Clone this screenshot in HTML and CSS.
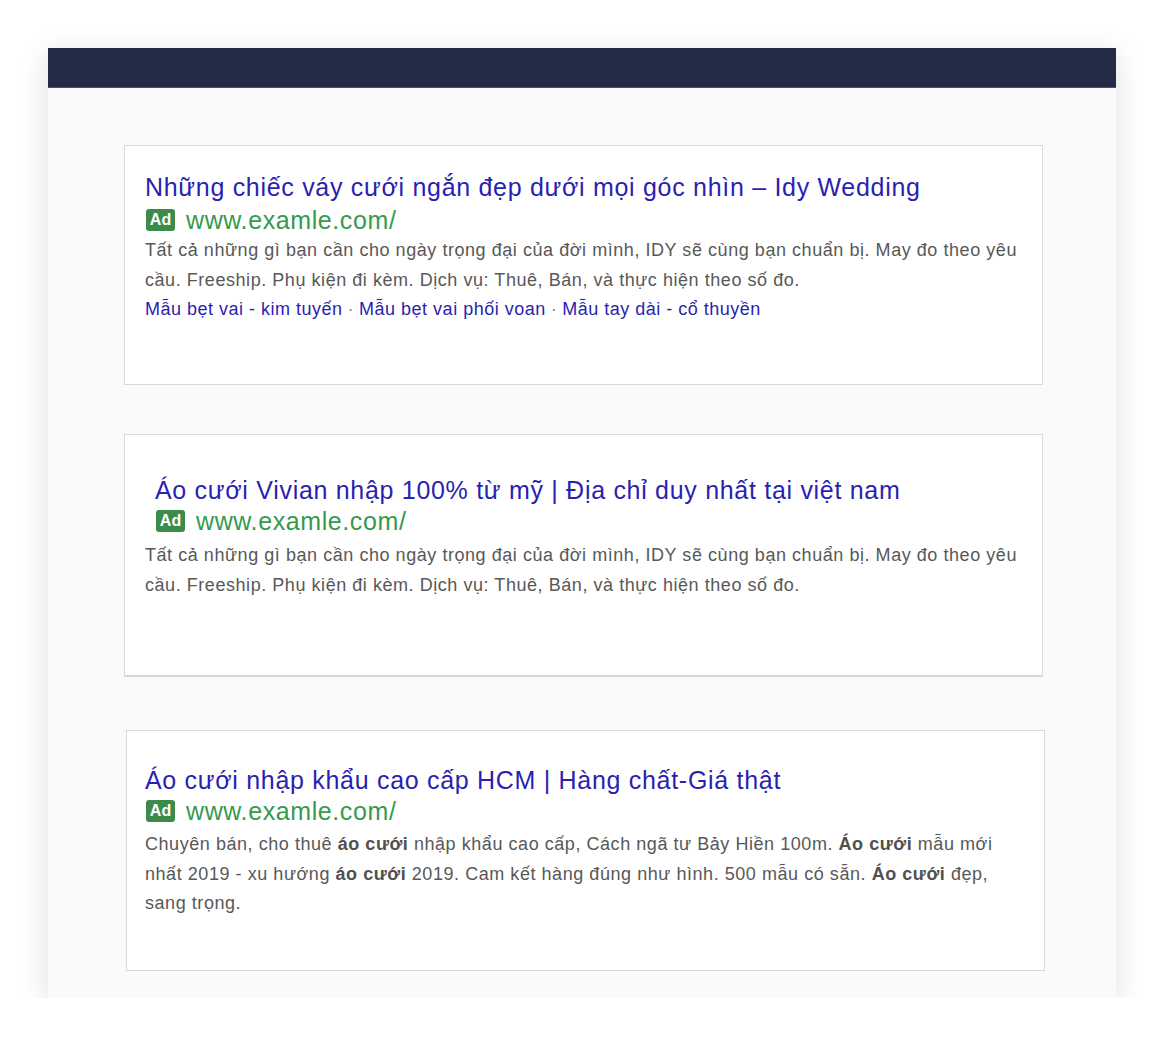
FILE: index.html
```html
<!DOCTYPE html>
<html lang="vi">
<head>
<meta charset="utf-8">
<title>Quảng cáo</title>
<link rel="stylesheet" href="styles.css">
</head>
<body>
<div class="panel">
  <div class="topbar"></div>
  <div class="content">
    <div class="ad ad-one">
      <div class="ad-title">Những chiếc váy cưới ngắn đẹp dưới mọi góc nhìn – Idy Wedding</div>
      <div class="ad-url"><span class="badge">Ad</span><span class="url">www.examle.com/</span></div>
      <div class="ad-desc">Tất cả những gì bạn cần cho ngày trọng đại của đời mình, IDY sẽ cùng bạn chuẩn bị. May đo theo yêu cầu. Freeship. Phụ kiện đi kèm. Dịch vụ: Thuê, Bán, và thực hiện theo số đo.</div>
      <div class="sitelinks"><span>Mẫu bẹt vai - kim tuyến</span><span class="sep">·</span><span>Mẫu bẹt vai phối voan</span><span class="sep">·</span><span>Mẫu tay dài - cổ thuyền</span></div>
    </div>
    <div class="ad ad-two">
      <div class="ad-title indent">Áo cưới Vivian nhập 100% từ mỹ | Địa chỉ duy nhất tại việt nam</div>
      <div class="ad-url indent"><span class="badge">Ad</span><span class="url">www.examle.com/</span></div>
      <div class="ad-desc">Tất cả những gì bạn cần cho ngày trọng đại của đời mình, IDY sẽ cùng bạn chuẩn bị. May đo theo yêu cầu. Freeship. Phụ kiện đi kèm. Dịch vụ: Thuê, Bán, và thực hiện theo số đo.</div>
    </div>
    <div class="ad ad-three">
      <div class="ad-title">Áo cưới nhập khẩu cao cấp HCM | Hàng chất-Giá thật</div>
      <div class="ad-url"><span class="badge">Ad</span><span class="url">www.examle.com/</span></div>
      <div class="ad-desc">Chuyên bán, cho thuê <b>áo cưới</b> nhập khẩu cao cấp, Cách ngã tư Bảy Hiền 100m. <b>Áo cưới</b> mẫu mới nhất 2019 - xu hướng <b>áo cưới</b> 2019. Cam kết hàng đúng như hình. 500 mẫu có sẵn. <b>Áo cưới</b> đẹp, sang trọng.</div>
    </div>
  </div>
</div>
</body>
</html>
```

FILE: styles.css
```css
html, body {
  margin: 0;
  padding: 0;
  background: #ffffff;
}
body {
  font-family: "Liberation Sans", Arial, sans-serif;
  padding: 48px 48px 0 48px;
}
.panel {
  width: 1068px;
  height: 950px;
  background: #fafafa;
  box-shadow: 0 6px 28px rgba(0, 0, 0, 0.13);
  display: flex;
  flex-direction: column;
}
.topbar {
  height: 39px;
  background: #232b47;
  border-bottom: 1px solid #4b5169;
}
.content {
  display: flex;
  flex-direction: column;
  padding-left: 76px;
}
.ad {
  width: 919px;
  box-sizing: border-box;
  background: #ffffff;
  border: 1px solid #d9d9d9;
  padding-left: 20px;
}
.ad-one {
  margin-top: 57px;
  height: 240px;
  padding-top: 26px;
}
.ad-two {
  margin-top: 49px;
  height: 243px;
  padding-top: 40px;
  border-bottom: 2px solid #d5d5d5;
}
.ad-three {
  margin-top: 53px;
  margin-left: 2px;
  height: 241px;
  padding-top: 34px;
  padding-left: 18px;
}
.ad-title {
  font-size: 25px;
  letter-spacing: 0.7px;
  line-height: 30px;
  color: #2a1fb0;
  white-space: nowrap;
}
.indent {
  padding-left: 10px;
}
.ad-url {
  display: flex;
  align-items: center;
  height: 26px;
  margin-top: 5px;
}
.ad-two .ad-url { margin-top: 3px; }
.ad-three .ad-url { margin-top: 3px; }
.badge {
  display: inline-flex;
  align-items: center;
  justify-content: center;
  width: 29px;
  height: 22px;
  margin-left: 1px;
  margin-right: 11px;
  background: #3d8b4a;
  color: #ffffff;
  font-size: 16px;
  font-weight: bold;
  border-radius: 3px;
}
.url {
  font-size: 25px;
  letter-spacing: 0.6px;
  color: #359a4e;
}
.ad-desc {
  margin-top: 3px;
  font-size: 18px;
  letter-spacing: 0.55px;
  line-height: 29.5px;
  color: #585858;
  width: 885px;
}
.ad-two .ad-desc { margin-top: 7px; }
.ad-three .ad-desc { margin-top: 6px; width: 870px; }
.ad-desc b {
  color: #505050;
}
.sitelinks {
  font-size: 18px;
  letter-spacing: 0.5px;
  line-height: 29px;
  color: #2a1fb0;
  white-space: nowrap;
}
.sep {
  color: #8a8a8a;
  margin: 0 5px;
}
```
